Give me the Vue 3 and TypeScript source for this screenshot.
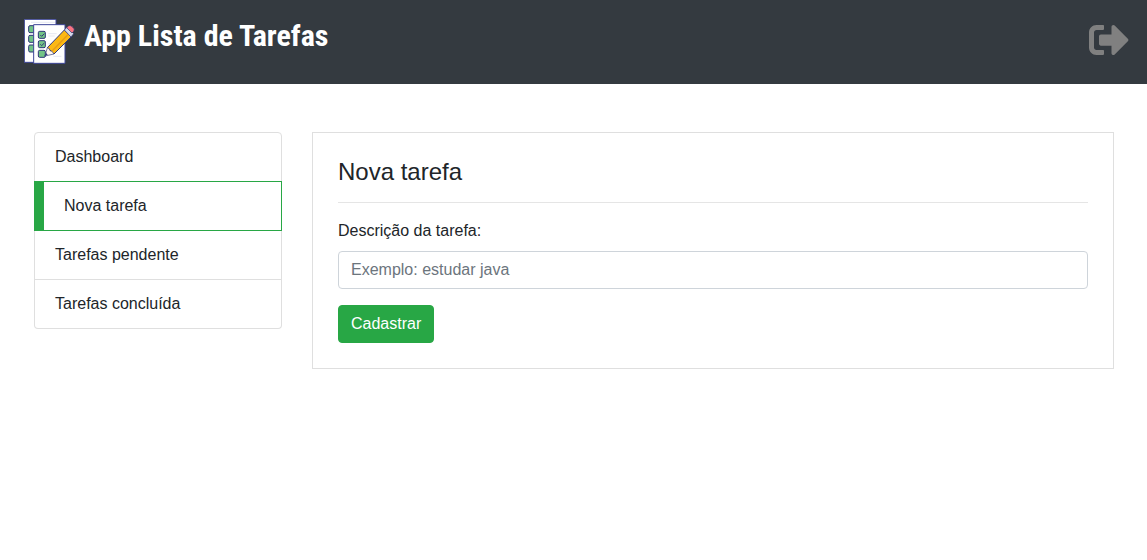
<script setup lang="ts">
import { ref } from 'vue'

interface MenuItem {
  label: string
  href: string
  active: boolean
}

const menu: MenuItem[] = [
  { label: 'Dashboard', href: '#dashboard', active: false },
  { label: 'Nova tarefa', href: '#nova', active: true },
  { label: 'Tarefas pendente', href: '#pendentes', active: false },
  { label: 'Tarefas concluída', href: '#concluidas', active: false },
]

const description = ref('')

function save(): void {
  description.value = ''
}
</script>

<template>
  <header class="navbar">
    <a class="brand" href="#">
      <svg class="logo" viewBox="42 42 153 135" aria-hidden="true">
        <path d="M43 43h95v129H43z" fill="#fff" stroke="#3d4598" stroke-width="3" />
        <path d="M63 52h72" stroke="#dadded" stroke-width="2" />
        <g fill="#72c486" stroke="#303878" stroke-width="3">
          <rect x="56" y="62" width="20" height="21" rx="4" />
          <rect x="56" y="91" width="20" height="21" rx="4" />
          <rect x="56" y="120" width="20" height="21" rx="4" />
        </g>
        <path d="M71 59h94v116H71z" fill="#fff" stroke="#3d4598" stroke-width="3" />
        <path d="M115 86h25M115 93h19M115 116h10M130 154h24" stroke="#dadded" stroke-width="2" />
        <g fill="#72c486" stroke="#303878" stroke-width="3">
          <rect x="85" y="79" width="21" height="21" rx="4" />
          <rect x="85" y="107" width="21" height="21" rx="4" />
          <rect x="85" y="136" width="21" height="21" rx="4" />
        </g>
        <path d="M91 90l4 4 8-8M91 118l4 4 8-8" fill="none" stroke="#303878" stroke-width="3" />
        <path d="M112 128l51-53 21 20-52 52z" fill="#fcb813" stroke="#303878" stroke-width="3" stroke-linejoin="round" />
        <path d="M124 140l52-53" stroke="#e59b16" stroke-width="4" />
        <path d="M112 128l6 3 2 6 6 2 6 8-27 6z" fill="#fff8ed" stroke="#303878" stroke-width="2" stroke-linejoin="round" />
        <path d="M108 143l5 6-10 5z" fill="#303878" />
        <path d="M163 75l8-9 20 20-8 10z" fill="#d5d9e9" stroke="#303878" stroke-width="2" />
        <path d="M170 68l5-5q5-4 10 1l6 6q4 5 0 9l-5 5z" fill="#fa7480" stroke="#303878" stroke-width="2" />
      </svg>
      <h1 class="title">App Lista de Tarefas</h1>
    </a>
    <a class="logout" href="#sair" aria-label="Sair">
      <svg class="logout-icon" viewBox="0 0 512 512" aria-hidden="true">
        <path fill="currentColor" d="M497 273L329 441c-15 15-41 4.500-41-17v-96H152c-13.300 0-24-10.700-24-24v-96c0-13.300 10.700-24 24-24h136V88c0-21.400 25.900-32 41-17l168 168c9.300 9.400 9.300 24.600 0 34zM192 436v-40c0-6.600-5.400-12-12-12H96c-17.700 0-32-14.300-32-32V160c0-17.700 14.300-32 32-32h84c6.600 0 12-5.400 12-12V76c0-6.600-5.400-12-12-12H96c-53 0-96 43-96 96v192c0 53 43 96 96 96h84c6.600 0 12-5.400 12-12z" />
      </svg>
    </a>
  </header>

  <div class="container">
    <nav class="menu">
      <a
        v-for="item in menu"
        :key="item.href"
        class="menu-item"
        :class="{ active: item.active }"
        :href="item.href"
        :aria-current="item.active ? 'page' : undefined"
      >{{ item.label }}</a>
    </nav>

    <main class="panel">
      <h2 class="heading">Nova tarefa</h2>
      <hr class="rule" />
      <form @submit.prevent="save">
        <label class="label" for="descricao">Descrição da tarefa:</label>
        <input id="descricao" v-model="description" class="field" type="text" placeholder="Exemplo: estudar java" />
        <button class="submit" type="submit">Cadastrar</button>
      </form>
    </main>
  </div>
</template>

<style>
body {
  margin: 0;
  background: #fff;
  color: #212529;
  font: 16px/24px "Liberation Sans", Arial, sans-serif;
}
</style>

<style scoped>
* {
  box-sizing: border-box;
}

.navbar {
  display: flex;
  justify-content: space-between;
  align-items: flex-start;
  padding: 18px;
  padding-left: 24px;
  min-height: 84px;
  background: #343a40;
}

.brand {
  display: flex;
  align-items: flex-start;
  gap: 9px;
  color: #fff;
  text-decoration: none;
}

.logo {
  width: 51px;
  height: 45px;
  margin-top: 1px;
}

.title {
  margin: 0;
  font: 700 30px/36px "Roboto Condensed", "Liberation Sans Narrow", Roboto, sans-serif;
}

.logout {
  display: block;
  margin-top: 2px;
  color: #808080;
}

.logout-icon {
  display: block;
  width: 40px;
  height: 40px;
}

.container {
  display: grid;
  grid-template-columns: 248px minmax(0, 1fr);
  align-items: start;
  gap: 30px;
  padding: 48px 33px 0 34px;
}

.menu {
  display: flex;
  flex-direction: column;
}

.menu-item {
  padding: 12px 20px;
  border: 1px solid #dfdfdf;
  color: #212529;
  text-decoration: none;
}

.menu-item + .menu-item {
  border-top-width: 0;
}

.menu-item:first-child {
  border-radius: 4px 4px 0 0;
}

.menu-item:last-child {
  border-radius: 0 0 4px 4px;
}

.menu-item + .menu-item.active {
  z-index: 1;
  margin-top: -1px;
  border: 1px solid #28a745;
  border-left-width: 10px;
}

.panel {
  padding: 24px 25px 25px;
  border: 1px solid #dfdfdf;
}

.heading {
  margin: 0;
  font-size: 24px;
  line-height: 29px;
  font-weight: 400;
}

.rule {
  margin: 16px 0;
  border: 0;
  border-top: 1px solid #e5e5e5;
}

.label {
  display: block;
  margin-bottom: 8px;
}

.field {
  display: block;
  width: 100%;
  height: 38px;
  margin-bottom: 16px;
  padding: 6px 12px;
  border: 1px solid #ced4da;
  border-radius: 4px;
  background: #fff;
  color: #495057;
  font: inherit;
}

.field::placeholder {
  color: #6c757d;
  opacity: 1;
}

.submit {
  display: block;
  padding: 6px 12px;
  border: 1px solid #28a745;
  border-radius: 4px;
  background: #28a745;
  color: #fff;
  font: inherit;
  cursor: pointer;
}
</style>
